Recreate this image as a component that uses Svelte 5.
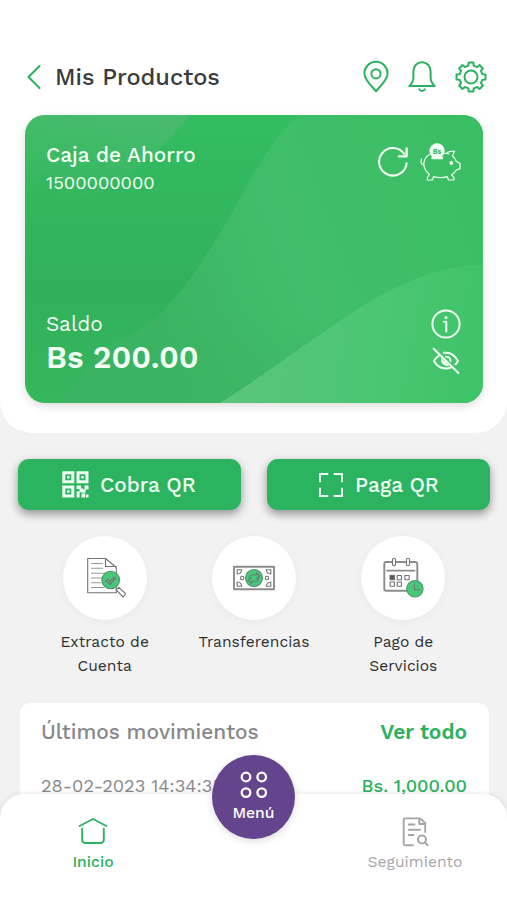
<script>
  const account = {
    name: 'Caja de Ahorro',
    number: '1500000000',
    balance: 'Bs 200.00'
  };

  const shortcuts = [
    { id: 'extract', label: 'Extracto de Cuenta' },
    { id: 'transfer', label: 'Transferencias' },
    { id: 'payments', label: 'Pago de Servicios' }
  ];

  const movements = [{ date: '28-02-2023 14:34:35', amount: 'Bs. 1,000.00' }];

  // outline of a cog, four points per tooth
  function gearPath(c, teeth, outer, inner) {
    const points = [];
    for (let i = 0; i < teeth; i++) {
      const mid = (i * 360) / teeth;
      for (const [offset, r] of [[-13, inner], [-9.5, outer], [9.5, outer], [13, inner]]) {
        const a = ((mid + offset) * Math.PI) / 180;
        points.push(`${(c + r * Math.sin(a)).toFixed(2)} ${(c - r * Math.cos(a)).toFixed(2)}`);
      }
    }
    return 'M' + points.join(' L') + ' Z';
  }
</script>

<div class="app">
  <section class="top">
    <header>
      <svg class="back" width="16" height="26" viewBox="0 0 16 26">
        <path d="M14.5 2 L3.5 13 L14.5 24" />
      </svg>
      <h1>Mis Productos</h1>
      <div class="actions">
        <svg width="28" height="34" viewBox="0 0 28 34">
          <path d="M14 31.3 C11 27.5 2.4 20 2.4 13.4 A11.6 11.6 0 0 1 25.6 13.4 C25.6 20 17 27.5 14 31.3 Z" />
          <circle cx="14" cy="13.8" r="4.6" />
        </svg>
        <svg width="30" height="34" viewBox="0 0 30 34">
          <path d="M2.3 26 H27.7 C25 23.5 23.6 21 23.6 17.5 V11.5 C23.6 6 19.8 2.2 15 2.2 S6.4 6 6.4 11.5 V17.5 C6.4 21 5 23.5 2.3 26 Z" />
          <path d="M12.2 29.4 C13.2 31.4 16.8 31.4 17.8 29.4" />
        </svg>
        <svg width="34" height="34" viewBox="0 0 34 34">
          <path d={gearPath(17, 8, 14.7, 11.7)} />
          <circle cx="17" cy="17" r="6.5" />
        </svg>
      </div>
    </header>

    <div class="card">
      <svg class="waves" width="458" height="288" viewBox="0 0 458 288">
        <defs>
          <linearGradient id="base" x1="0" y1="0" x2="0" y2="1">
            <stop offset="0" stop-color="#33bd61" />
            <stop offset="0.6" stop-color="#31b05b" />
            <stop offset="1" stop-color="#35b75e" />
          </linearGradient>
          <linearGradient id="corner" x1="0.6" y1="0" x2="0.3" y2="1">
            <stop offset="0" stop-color="#48ba6c" />
            <stop offset="1" stop-color="#48ba6c" stop-opacity="0" />
          </linearGradient>
          <linearGradient id="middle" x1="0.2" y1="0.6" x2="1" y2="0.4">
            <stop offset="0" stop-color="#3bb362" />
            <stop offset="0.45" stop-color="#41be6b" />
            <stop offset="1" stop-color="#3abe64" />
          </linearGradient>
          <linearGradient id="front" x1="0" y1="0.5" x2="1" y2="0.6">
            <stop offset="0" stop-color="#5cc47c" />
            <stop offset="0.6" stop-color="#4bc673" />
            <stop offset="1" stop-color="#3ec367" />
          </linearGradient>
          <linearGradient id="fade" x1="0" y1="0" x2="0" y2="1">
            <stop offset="0.35" stop-color="#3bb362" stop-opacity="0" />
            <stop offset="0.7" stop-color="#3bb362" stop-opacity="0.6" />
          </linearGradient>
        </defs>
        <rect width="458" height="288" fill="url(#base)" />
        <path d="M0 0 H165 C140 30 115 56 85 72 C60 86 30 80 0 84 Z" fill="url(#corner)" />
        <path d="M273 0 C232 40 215 90 180 142 C155 180 130 210 95 225 C60 243 60 265 30 288 H458 V0 Z" fill="url(#middle)" />
        <path d="M180 142 C155 180 130 210 95 225 C60 243 60 265 30 288 H330 V142 Z" fill="url(#fade)" opacity="0.4" />
        <path d="M195 288 C250 254 310 205 360 178 C395 160 425 150 458 150 V288 Z" fill="url(#front)" />
      </svg>
      <div class="row">
        <div>
          <div class="name">{account.name}</div>
          <div class="number">{account.number}</div>
        </div>
        <div class="tools">
          <svg class="refresh" width="32" height="32" viewBox="0 0 32 32">
            <path stroke-width="2.1" d="M29.6 17.3 A13.8 13.8 0 1 1 27 7.6" />
            <path stroke-width="2.3" d="M29.6 2.3 V10.4 H21.8" />
          </svg>
          <svg width="42" height="40" viewBox="0 0 42 40">
            <g stroke-width="1.2">
              <path d="M27 9.6 C29 8.4 31.5 8 34.5 8 L32.5 13 C34.5 14.6 35.5 16.3 36.3 18.5 L40 20.3 V25.6 L36 27.2 C34.7 29.6 33 31 31.5 32 L34 34.5 V37 H28.5 L27.3 33.6 C23 34.8 18 34.8 13.5 33.6 L12.5 37 H7.3 V34.8 L9.4 31.3 C4.5 27.7 2.4 22 4.6 17 C5.8 14 8 12 11 10.7" />
              <path d="M4 22.4 C1 21.5 0.5 18.7 1.5 15.8 M20 9.5 L29 11" />
            </g>
            <circle class="solid" cx="17" cy="7.8" r="7.6" />
            <path class="solid" d="M11.5 14 H23 V16.3 H11.5 Z" />
            <circle class="solid" cx="31.3" cy="20" r="1.9" />
            <text x="17" y="10.5" text-anchor="middle">Bs</text>
          </svg>
        </div>
      </div>
      <div class="row bottom">
        <div>
          <div class="label">Saldo</div>
          <div class="balance">{account.balance}</div>
        </div>
        <div class="side">
          <svg width="30" height="30" viewBox="0 0 30 30">
            <circle cx="15" cy="15" r="13.6" stroke-width="2" />
            <path stroke-width="2" d="M12.8 12.7 H15.3 V22.6" />
            <circle class="solid" cx="15" cy="8.5" r="1.5" />
          </svg>
          <svg width="28" height="28" viewBox="0 0 28 28">
            <path stroke-width="2" d="M7 8.5 C5 10 3 12 2 14 C4.5 18.5 9 21.5 14 21.5 C15.7 21.5 17.3 21.2 18.7 20.6 M12 5.8 C18 4.9 23 8.5 26 14 C25.3 15.3 24.4 16.4 23.4 17.3" />
            <path class="solid" d="M9 11 L17.5 18.5 C13.5 20.2 8.3 17.5 9 11 Z" />
            <path stroke-width="1.8" d="M13.8 9.7 C16.5 9.7 18.4 11.5 18.5 14" />
            <path stroke-width="2" d="M1.7 1.7 L26.3 26" />
          </svg>
        </div>
      </div>
    </div>
  </section>

  <div class="buttons">
    <button class="charge">
      <svg width="27" height="27" viewBox="0 0 27 27">
        <g stroke-width="3">
          <rect x="1.8" y="1.8" width="9" height="9" />
          <rect x="16" y="1.8" width="9" height="9" />
          <rect x="1.8" y="16" width="9" height="9" />
        </g>
        <path class="solid" d="M5 5h2.6v2.6H5z M19.2 5h2.6v2.6h-2.6z M5 19.2h2.6v2.6H5z M14.6 14.6h4.5v3.5h-4.5z M22.5 14.6h4v4h-3v3.2h-3.4v-3.6h2.4z M17.5 17.5h3.6v3.7h-3.6z M14.6 20.5h3v6h-3z M19.5 22.4h3.7v4.1h-3.7z M24 23.5h2.5v3H24z" />
      </svg>
      <span>Cobra QR</span>
    </button>
    <button class="pay">
      <svg width="26" height="26" viewBox="0 0 26 26">
        <path stroke-width="1.9" d="M10.3 2 H2 V10.3 M15.7 2 H24 V10.3 M10.3 24 H2 V15.7 M15.7 24 H24 V15.7" />
      </svg>
      <span>Paga QR</span>
    </button>
  </div>

  <div class="shortcuts">
    {#each shortcuts as item}
      <div class="shortcut">
        <div class="circle">
          {#if item.id === 'extract'}
            <svg width="42" height="42" viewBox="0 0 42 42">
              <path d="M3.7 1.5 H21.5 L32.3 10.5 V35.8 H3.7 Z M21.5 1.5 V9.5 H32.3" />
              <path class="thin" d="M7.5 6.5 H18.5 M7.5 11.3 H18.5 M7.5 16.2 H25 M7.5 21 H18 M7.5 25.7 H17 M7.5 30.5 H20" />
              <path class="paper" d="M32 32.6 L34.8 30.4 L42 37 L39 40 Z" />
              <circle class="green" cx="26.7" cy="23" r="8.8" />
              <path d="M21.7 23.5 L24 22 L25.7 24.8 L30.4 20 L31.6 21.6 L25.9 27.5 Z" />
            </svg>
          {:else if item.id === 'transfer'}
            <svg width="42" height="42" viewBox="0 0 42 42">
              <rect class="double" x="1" y="9.8" width="40" height="22.4" />
              <path d="M4.2 12.7 H8.8 C8.5 15 7 16.8 4.2 17 Z M37.8 12.7 H33.2 C33.5 15 35 16.8 37.8 17 Z M4.2 29.3 H8.8 C8.5 27 7 25.2 4.2 25 Z M37.8 29.3 H33.2 C33.5 27 35 25.2 37.8 25 Z" />
              <circle cx="9.2" cy="21" r="1.7" />
              <circle cx="34" cy="21" r="1.7" />
              <circle class="green" cx="21" cy="21" r="8.5" />
              <path d="M16.3 21 C16.3 18.8 17.3 18 19.5 18 H23.3 V15.8 L26.8 18.8 L23.3 21.6 M25.7 21 C25.7 23.2 24.7 24.2 22.5 24.2 H18.7 V26.3 L15.2 23.4 L18.7 20.6" />
            </svg>
          {:else}
            <svg width="42" height="42" viewBox="0 0 42 42">
              <rect class="double" x="2.3" y="5" width="33" height="28.8" rx="2" />
              <path class="double" d="M5 13.6 H32.5" />
              <rect class="paper" x="10.5" y="1.3" width="3" height="7.5" rx="1.5" />
              <rect class="paper" x="24.5" y="1.3" width="3" height="7.5" rx="1.5" />
              <rect class="dark" x="8" y="18.3" width="4.4" height="4.4" />
              <path d="M15.2 18.5h4.2v4.2h-4.2z M22.9 18.5h4.2v4.2h-4.2z M8.2 25h4.2v4.2H8.2z M15.2 25h4.2v4.2h-4.2z" />
              <circle class="green" cx="32.9" cy="31.8" r="8.2" />
              <path d="M32.4 27 V32.7 H37.7" />
            </svg>
          {/if}
        </div>
        <span>{item.label}</span>
      </div>
    {/each}
  </div>

  <section class="movements">
    <div class="line title">
      <h2>Últimos movimientos</h2>
      <span class="all">Ver todo</span>
    </div>
    {#each movements as movement}
      <div class="line">
        <span class="date">{movement.date}</span>
        <span class="amount">{movement.amount}</span>
      </div>
    {/each}
  </section>

  <nav>
    <div class="tab active">
      <svg width="30" height="28" viewBox="0 0 30 28">
        <path stroke-width="1.9" d="M1.6 9 L15 2 L28.4 9 M4.2 11.8 V22.5 Q4.2 26 7.7 26 H22.3 Q25.8 26 25.8 22.5 V11.8" />
      </svg>
      <span>Inicio</span>
    </div>
    <div class="tab">
      <svg width="28" height="30" viewBox="0 0 28 30">
        <path stroke-width="1.9" d="M12 28.2 H4 Q2.7 28.2 2.7 27 V2.6 Q2.7 1.4 4 1.4 H19 L24.2 6 V15 M18.3 1.4 V7 H24.2 M7.7 7.5 H13.5 M7.7 12.7 H19 M7.7 18 H12.5" />
        <circle cx="21" cy="22.5" r="4" stroke-width="2" />
        <path stroke-width="2" d="M23.9 25.4 L26.6 28.3" />
      </svg>
      <span>Seguimiento</span>
    </div>
    <div class="menu">
      <svg width="28" height="28" viewBox="0 0 28 28">
        <circle cx="6" cy="6" r="4.3" />
        <circle cx="21.7" cy="6" r="4.3" />
        <circle cx="6" cy="21.6" r="4.3" />
        <circle cx="21.7" cy="21.6" r="4.3" />
      </svg>
      <span>Menú</span>
    </div>
  </nav>
</div>

<style>
  :global(body) {
    background: #f2f2f2;
  }

  .app {
    position: relative;
    width: 507px;
    height: 900px;
    overflow: hidden;
    background: #f2f2f2;
    font-family: 'Work Sans', Inter, 'Liberation Sans', sans-serif;
    color: #2f2f31;
  }

  svg {
    display: block;
    fill: none;
    stroke: currentColor;
    stroke-linecap: round;
    stroke-linejoin: round;
  }

  .solid {
    fill: currentColor;
    stroke: none;
  }

  h1,
  h2 {
    margin: 0;
    font-weight: 500;
  }

  .top {
    box-sizing: border-box;
    height: 433px;
    padding: 57px 24px 0 25px;
    background: #fff;
    border-radius: 0 0 32px 32px;
  }

  header {
    display: flex;
    align-items: center;
    height: 40px;
    margin-bottom: 18px;
  }

  .back {
    color: #2bb160;
    stroke-width: 2.1;
    margin-right: 14px;
  }

  h1 {
    font-size: 23.6px;
    color: #3b3b3d;
  }

  .actions {
    display: flex;
    align-items: center;
    gap: 17px;
    margin-left: auto;
    margin-right: -5px;
    color: #2bb160;
  }

  .actions svg {
    stroke-width: 2;
  }

  .card {
    position: relative;
    box-sizing: border-box;
    display: flex;
    flex-direction: column;
    justify-content: space-between;
    width: 458px;
    height: 288px;
    padding: 26px 22px 25px 21px;
    overflow: hidden;
    border-radius: 20px;
    color: #f2fff3;
    box-shadow: 0 3px 8px rgba(0, 0, 0, 0.14);
  }

  .waves {
    position: absolute;
    top: 0;
    left: 0;
    stroke: none;
  }

  .row {
    position: relative;
    display: flex;
    justify-content: space-between;
  }

  .name {
    font-size: 20.8px;
    line-height: 28px;
    font-weight: 500;
  }

  .number {
    font-size: 18.3px;
    line-height: 27px;
  }

  .tools {
    display: flex;
    gap: 11px;
    margin-right: -1px;
    padding-top: 2px;
  }

  .tools .refresh {
    margin-top: 3px;
  }

  .tools text {
    font-size: 7px;
    font-weight: 700;
    fill: #39b964;
    stroke: none;
  }

  .bottom {
    align-items: flex-end;
  }

  .label {
    font-size: 20.8px;
    line-height: 28px;
  }

  .balance {
    font-size: 31.2px;
    line-height: 40px;
    font-weight: 600;
  }

  .side {
    display: flex;
    flex-direction: column;
    align-items: center;
    gap: 8px;
    padding-bottom: 3px;
  }

  .buttons {
    display: flex;
    gap: 26px;
    padding: 26px 17px 0 18px;
  }

  button {
    display: flex;
    align-items: center;
    width: 223px;
    height: 51px;
    padding: 0 0 0 44px;
    border: 0;
    border-radius: 11px;
    background: #2bb360;
    color: #f0fff3;
    font-family: inherit;
    font-size: 20.8px;
    font-weight: 500;
    box-shadow: 0 4px 10px rgba(0, 0, 0, 0.4);
  }

  button svg {
    stroke-linecap: butt;
    stroke-linejoin: miter;
    margin-right: 11px;
  }

  .pay {
    padding-left: 51px;
  }

  .shortcuts {
    display: flex;
    padding: 26px 29px 0 30px;
  }

  .shortcut {
    display: flex;
    flex-direction: column;
    align-items: center;
    width: 149.4px;
    height: 141px;
    font-size: 15.6px;
    line-height: 23.5px;
    text-align: center;
  }

  .shortcut span {
    width: 118px;
  }

  .circle {
    display: flex;
    align-items: center;
    justify-content: center;
    width: 84px;
    height: 84px;
    margin-bottom: 10px;
    border-radius: 50%;
    background: #fff;
    color: #737373;
    box-shadow: 0 2px 10px rgba(0, 0, 0, 0.04);
  }

  .circle svg {
    stroke-width: 1.1;
  }

  .circle .thin {
    stroke: #969696;
  }

  .circle .double {
    stroke: #8c8c8c;
    stroke-width: 1.9;
  }

  .circle .paper {
    fill: #fff;
  }

  .circle .dark {
    fill: #4c5d54;
  }

  .circle .green {
    fill: #45c878;
    stroke: #51936b;
  }

  .movements {
    box-sizing: border-box;
    width: 469px;
    height: 197px;
    margin: 26px 0 0 20px;
    padding: 15px 22px 0 21px;
    border-radius: 10px 10px 0 0;
    background: #fff;
  }

  .line {
    display: flex;
    justify-content: space-between;
    font-size: 18.2px;
    line-height: 28px;
  }

  .title {
    margin-bottom: 26px;
    font-size: 20.9px;
  }

  h2 {
    font-size: 20.9px;
    color: #88888a;
  }

  .all {
    color: #2bb160;
    font-weight: 600;
  }

  .date {
    color: #88888a;
  }

  .amount {
    color: #2bb160;
    font-weight: 500;
  }

  nav {
    position: absolute;
    left: 0;
    bottom: 0;
    box-sizing: border-box;
    display: flex;
    justify-content: space-between;
    width: 507px;
    height: 106px;
    padding: 23px 32px 0 33px;
    border-radius: 24px 24px 0 0;
    background: #fff;
    box-shadow: 0 0 6px rgba(0, 0, 0, 0.1);
  }

  .tab {
    display: flex;
    flex-direction: column;
    align-items: center;
    justify-content: space-between;
    width: 120px;
    height: 56px;
    color: #a6a6a8;
    font-size: 15.7px;
    line-height: 22px;
  }

  .active {
    color: #2bb160;
    font-weight: 500;
  }

  .menu {
    position: absolute;
    top: -39px;
    left: 212px;
    box-sizing: border-box;
    display: flex;
    flex-direction: column;
    align-items: center;
    width: 83px;
    height: 84px;
    padding-top: 16px;
    border-radius: 50%;
    background: #64458d;
    color: #fff;
    font-size: 15.7px;
    line-height: 20px;
    font-weight: 500;
    box-shadow: 0 2px 7px rgba(0, 0, 0, 0.15);
  }

  .menu svg {
    stroke-width: 2.3;
    margin-bottom: 4px;
  }
</style>
